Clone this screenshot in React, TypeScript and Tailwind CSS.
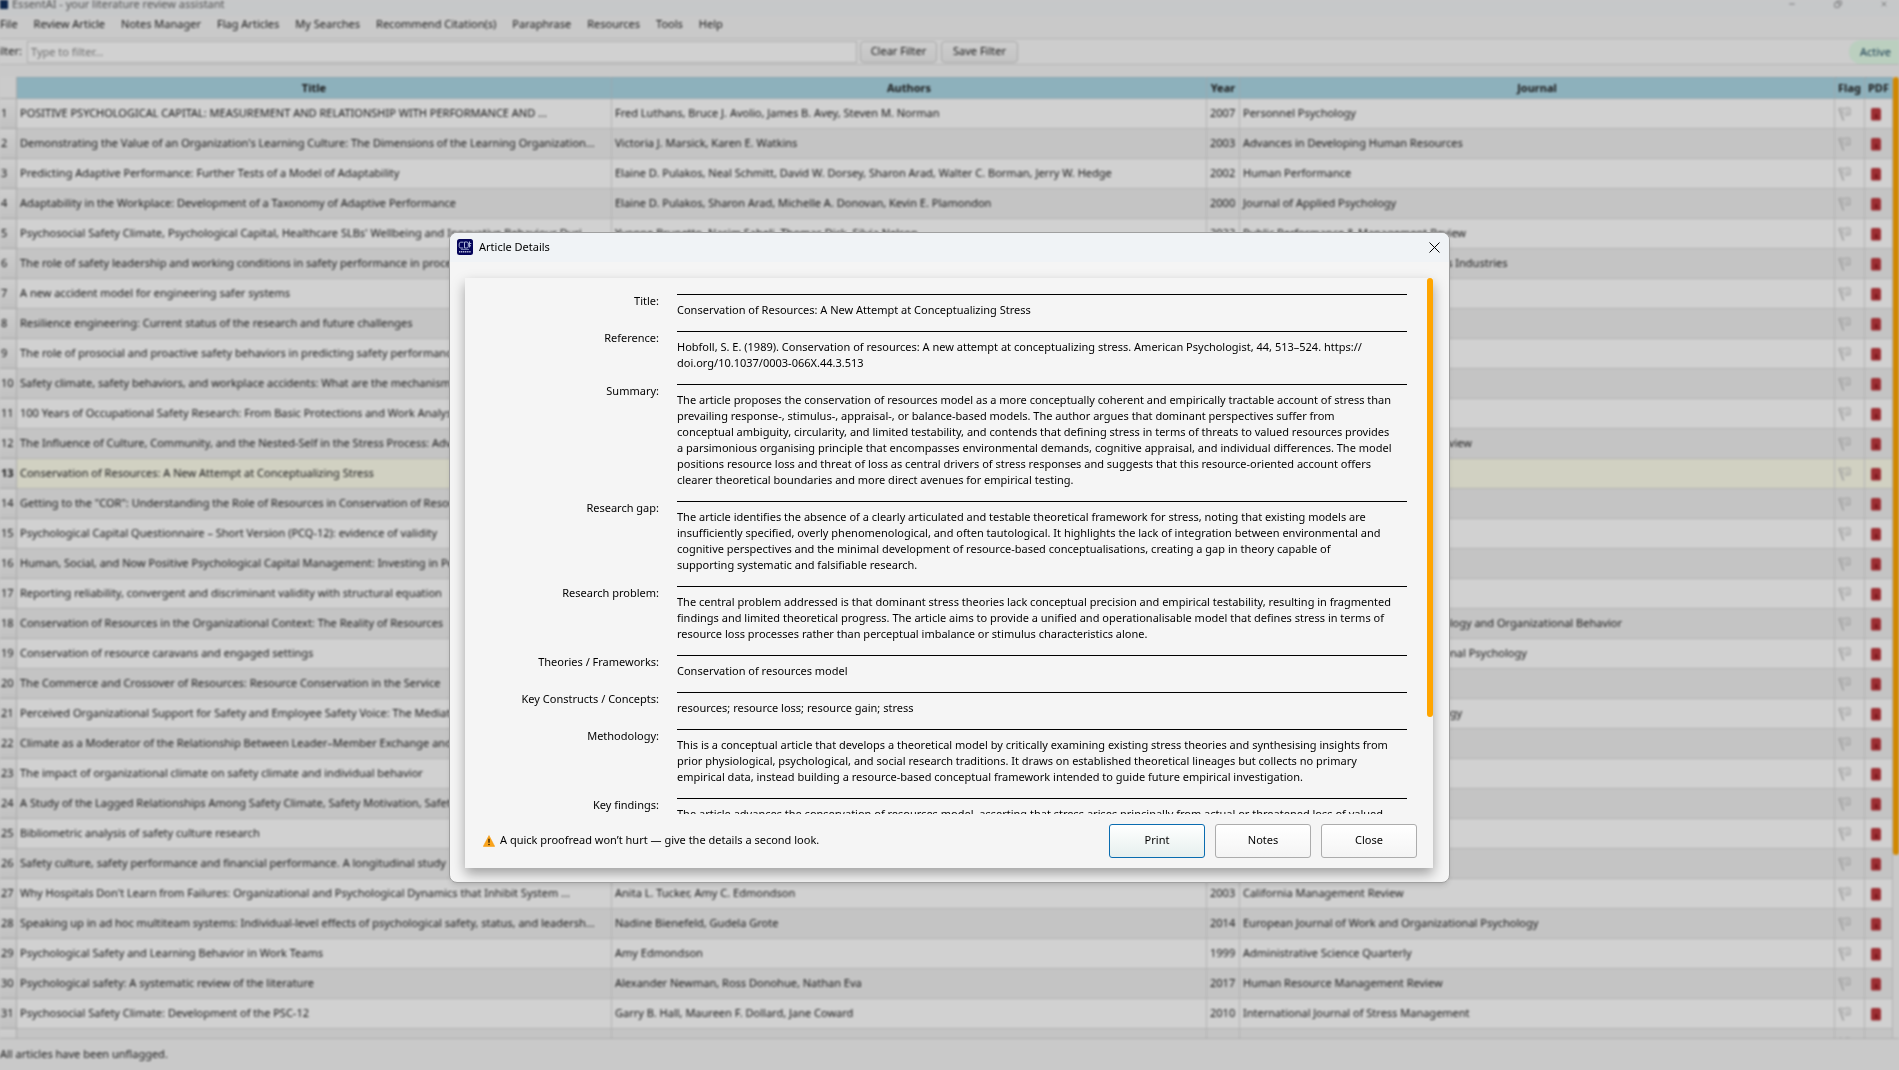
import clsx from "clsx";
import { Copy, Minus, X } from "lucide-react";

interface Article {
  title: string;
  authors: string;
  year: string;
  journal: string;
}

const MENU_ITEMS = [
  "File",
  "Review Article",
  "Notes Manager",
  "Flag Articles",
  "My Searches",
  "Recommend Citation(s)",
  "Paraphrase",
  "Resources",
  "Tools",
  "Help",
];

const SELECTED_ROW = 13;

const toArticle = ([title, authors, year, journal]: string[]): Article => ({
  title,
  authors,
  year,
  journal,
});

const ARTICLES: Article[] = [
  ["POSITIVE PSYCHOLOGICAL CAPITAL: MEASUREMENT AND RELATIONSHIP WITH PERFORMANCE AND ...", "Fred Luthans, Bruce J. Avolio, James B. Avey, Steven M. Norman", "2007", "Personnel Psychology"],
  ["Demonstrating the Value of an Organization's Learning Culture: The Dimensions of the Learning Organization...", "Victoria J. Marsick, Karen E. Watkins", "2003", "Advances in Developing Human Resources"],
  ["Predicting Adaptive Performance: Further Tests of a Model of Adaptability", "Elaine D. Pulakos, Neal Schmitt, David W. Dorsey, Sharon Arad, Walter C. Borman, Jerry W. Hedge", "2002", "Human Performance"],
  ["Adaptability in the Workplace: Development of a Taxonomy of Adaptive Performance", "Elaine D. Pulakos, Sharon Arad, Michelle A. Donovan, Kevin E. Plamondon", "2000", "Journal of Applied Psychology"],
  ["Psychosocial Safety Climate, Psychological Capital, Healthcare SLBs' Wellbeing and Innovative Behaviour Duri...", "Yvonne Brunetto, Nasim Saheli, Thomas Dick, Silvia Nelson", "2022", "Public Performance & Management Review"],
  ["The role of safety leadership and working conditions in safety performance in process industries", "", "2018", "Journal of Loss Prevention in the Process Industries"],
  ["A new accident model for engineering safer systems", "", "", ""],
  ["Resilience engineering: Current status of the research and future challenges", "", "", ""],
  ["The role of prosocial and proactive safety behaviors in predicting safety performance", "", "", ""],
  ["Safety climate, safety behaviors, and workplace accidents: What are the mechanisms?", "", "", ""],
  ["100 Years of Occupational Safety Research: From Basic Protections and Work Analysis", "", "", ""],
  ["The Influence of Culture, Community, and the Nested-Self in the Stress Process: Advancing", "", "2001", "Applied Psychology: An International Review"],
  ["Conservation of Resources: A New Attempt at Conceptualizing Stress", "", "", ""],
  ["Getting to the \"COR\": Understanding the Role of Resources in Conservation of Resources", "", "", ""],
  ["Psychological Capital Questionnaire – Short Version (PCQ-12): evidence of validity", "", "", ""],
  ["Human, Social, and Now Positive Psychological Capital Management: Investing in People", "", "", ""],
  ["Reporting reliability, convergent and discriminant validity with structural equation", "", "", ""],
  ["Conservation of Resources in the Organizational Context: The Reality of Resources", "", "2018", "Annual Review of Organizational Psychology and Organizational Behavior"],
  ["Conservation of resource caravans and engaged settings", "", "2011", "Journal of Occupational and Organizational Psychology"],
  ["The Commerce and Crossover of Resources: Resource Conservation in the Service", "", "", ""],
  ["Perceived Organizational Support for Safety and Employee Safety Voice: The Mediating", "", "2010", "Journal of Occupational Health Psychology"],
  ["Climate as a Moderator of the Relationship Between Leader–Member Exchange and", "", "", ""],
  ["The impact of organizational climate on safety climate and individual behavior", "", "", ""],
  ["A Study of the Lagged Relationships Among Safety Climate, Safety Motivation, Safety", "", "", ""],
  ["Bibliometric analysis of safety culture research", "", "", ""],
  ["Safety culture, safety performance and financial performance. A longitudinal study", "", "", ""],
  ["Why Hospitals Don't Learn from Failures: Organizational and Psychological Dynamics that Inhibit System ...", "Anita L. Tucker, Amy C. Edmondson", "2003", "California Management Review"],
  ["Speaking up in ad hoc multiteam systems: Individual-level effects of psychological safety, status, and leadersh...", "Nadine Bienefeld, Gudela Grote", "2014", "European Journal of Work and Organizational Psychology"],
  ["Psychological Safety and Learning Behavior in Work Teams", "Amy Edmondson", "1999", "Administrative Science Quarterly"],
  ["Psychological safety: A systematic review of the literature", "Alexander Newman, Ross Donohue, Nathan Eva", "2017", "Human Resource Management Review"],
  ["Psychosocial Safety Climate: Development of the PSC-12", "Garry B. Hall, Maureen F. Dollard, Jane Coward", "2010", "International Journal of Stress Management"],
  ["", "", "", ""],
].map(toArticle);

const DETAILS: { label: string; lines: string[] }[] = [
  {
    label: "Title:",
    lines: ["Conservation of Resources: A New Attempt at Conceptualizing Stress"],
  },
  {
    label: "Reference:",
    lines: [
      "Hobfoll, S. E. (1989). Conservation of resources: A new attempt at conceptualizing stress. American Psychologist, 44, 513–524. https://",
      "doi.org/10.1037/0003-066X.44.3.513",
    ],
  },
  {
    label: "Summary:",
    lines: [
      "The article proposes the conservation of resources model as a more conceptually coherent and empirically tractable account of stress than",
      "prevailing response-, stimulus-, appraisal-, or balance-based models. The author argues that dominant perspectives suffer from",
      "conceptual ambiguity, circularity, and limited testability, and contends that defining stress in terms of threats to valued resources provides",
      "a parsimonious organising principle that encompasses environmental demands, cognitive appraisal, and individual differences. The model",
      "positions resource loss and threat of loss as central drivers of stress responses and suggests that this resource-oriented account offers",
      "clearer theoretical boundaries and more direct avenues for empirical testing.",
    ],
  },
  {
    label: "Research gap:",
    lines: [
      "The article identifies the absence of a clearly articulated and testable theoretical framework for stress, noting that existing models are",
      "insufficiently specified, overly phenomenological, and often tautological. It highlights the lack of integration between environmental and",
      "cognitive perspectives and the minimal development of resource-based conceptualisations, creating a gap in theory capable of",
      "supporting systematic and falsifiable research.",
    ],
  },
  {
    label: "Research problem:",
    lines: [
      "The central problem addressed is that dominant stress theories lack conceptual precision and empirical testability, resulting in fragmented",
      "findings and limited theoretical progress. The article aims to provide a unified and operationalisable model that defines stress in terms of",
      "resource loss processes rather than perceptual imbalance or stimulus characteristics alone.",
    ],
  },
  { label: "Theories / Frameworks:", lines: ["Conservation of resources model"] },
  {
    label: "Key Constructs / Concepts:",
    lines: ["resources; resource loss; resource gain; stress"],
  },
  {
    label: "Methodology:",
    lines: [
      "This is a conceptual article that develops a theoretical model by critically examining existing stress theories and synthesising insights from",
      "prior physiological, psychological, and social research traditions. It draws on established theoretical lineages but collects no primary",
      "empirical data, instead building a resource-based conceptual framework intended to guide future empirical investigation.",
    ],
  },
  {
    label: "Key findings:",
    lines: [
      "The article advances the conservation of resources model, asserting that stress arises principally from actual or threatened loss of valued",
    ],
  },
];

function FlagIcon() {
  return (
    <svg width="14" height="16" viewBox="0 0 14 16" fill="none" stroke="#bdbdbd">
      <path d="M1 2.500c2-1.500 3.500 1 5.500.2S10 1.500 12 2.500V9c-2-1-3.500.6-5.500.2" />
      <path d="M1 2.500l4.500 12" strokeWidth="1.500" />
      <path d="M4 4l2 4M9 4v4" />
    </svg>
  );
}

function PdfIcon() {
  return (
    <svg width="12" height="14" viewBox="0 0 12 14">
      <path d="M1 2.500Q1 1 2.500 1H9.500L11 2.500V12Q11 13.500 9.500 13.500H2.500Q1 13.500 1 12z" fill="#c0393f" />
      <path d="M5 11.500c1.500-1.500 2-3 1.500-4.500M5 8.500c1.500.5 2 1.500 3 3" fill="none" stroke="#6e0b12" />
    </svg>
  );
}

function AppIcon() {
  return (
    <svg width="16" height="16" viewBox="0 0 16 16" fill="none">
      <rect width="16" height="16" rx="2.500" fill="#04045a" />
      <path
        d="M6.500 3.200H3.800Q2.200 3.200 2.200 5v2.500q0 1.500 1.600 1.500h2.400M7.500 3h2.300q1.500 0 1.500 1.700v2.800q0 1.500-1.500 1.500H7.500zM12.500 2.500v6M14.300 4.500h-3M14 6.500q-1.500 0-1.500 1.500"
        stroke="#a9b3d6"
      />
      <path d="M4 10.500h8" stroke="#6f78ad" />
      <path d="M2 12.800h12" stroke="#b7bdd9" strokeWidth="1.400" strokeDasharray="1.300 .6" />
    </svg>
  );
}

function WarningIcon() {
  return (
    <svg width="12" height="12" viewBox="0 0 12 12">
      <path d="M6 .6L11.700 11.400H.3z" fill="#fba41a" stroke="#f39a12" strokeWidth=".6" strokeLinejoin="round" />
      <path d="M6 3.800v4" stroke="#2b1a00" strokeWidth="1.300" />
      <circle cx="6" cy="9.500" r=".8" fill="#2b1a00" />
    </svg>
  );
}

function ToolbarButton({ children }: { children: string }) {
  return (
    <button className="h-[22px] w-[77px] rounded-sm border border-[#cfcfcf] bg-linear-to-b from-[#fbfbfb] to-[#efefef]">
      {children}
    </button>
  );
}

function ArticleTable() {
  const th = "h-[22px] border-r border-b border-r-[#c9c9c9] border-b-[#c9c9c9] border-t border-t-[#9fb9c4] border-dotted bg-[#add8e6] p-0 font-bold";
  const td = "overflow-hidden border-r border-b border-[#dadada] p-0 pl-[3px] whitespace-nowrap";

  return (
    <table className="w-full table-fixed border-separate border-spacing-0">
      <colgroup>
        <col className="w-[17px]" />
        <col />
        <col />
        <col className="w-[33px]" />
        <col />
        <col className="w-[30px]" />
        <col className="w-7" />
      </colgroup>
      <thead>
        <tr>
          <th className="border-r border-b border-[#cfcfcf] bg-[#f8f8f8] p-0" />
          {["Title", "Authors", "Year", "Journal", "Flag", "PDF"].map((name) => (
            <th key={name} className={th}>
              {name}
            </th>
          ))}
        </tr>
      </thead>
      <tbody>
        {ARTICLES.map((article, i) => (
          <tr
            key={i}
            className={clsx(
              "h-[30px]",
              i + 1 === SELECTED_ROW ? "bg-[#ffffed]" : i % 2 ? "bg-[#f0f0f0]" : "bg-white"
            )}
          >
            <th
              className={clsx(
                "border-r border-b border-[#cfcfcf] bg-linear-to-b from-[#fbfbfb] to-[#ececec] p-0 pl-px text-left",
                i + 1 === SELECTED_ROW ? "font-bold" : "font-normal"
              )}
            >
              {article.title && i + 1}
            </th>
            <td className={td}>{article.title}</td>
            <td className={td}>{article.authors}</td>
            <td className={td}>{article.year}</td>
            <td className={td}>{article.journal}</td>
            <td className={td}>
              <FlagIcon />
            </td>
            <td className={clsx(td, "pl-[5px]")}>
              <PdfIcon />
            </td>
          </tr>
        ))}
      </tbody>
    </table>
  );
}

function MainWindow() {
  return (
    <div className="flex h-screen flex-col overflow-hidden bg-[#f6f6f6] text-[#222] blur-[1px]">
      {/* Title bar */}
      <div className="flex h-4 shrink-0 items-start justify-between bg-[#f2f4f6] pr-[11px] leading-2 text-[#666]">
        <div className="flex gap-1">
          <div className="h-[9px] w-2 bg-[#12305e]" />
          <span>EssentAI - your literature review assistant</span>
        </div>
        <div className="flex gap-[38px]">
          <Minus size={8} />
          <Copy size={8} className="-scale-x-100" />
          <X size={8} />
        </div>
      </div>

      {/* Menu */}
      <nav className="flex h-[22px] shrink-0 gap-4 leading-4">
        {MENU_ITEMS.map((item) => (
          <button key={item} className="h-4">
            {item}
          </button>
        ))}
      </nav>

      {/* Filter row */}
      <div className="flex h-[27px] shrink-0 items-center border-t border-b border-[#dcdcdc] bg-[#fafafa]">
        <label htmlFor="filter" className="flex w-[22px] shrink-0 justify-end overflow-hidden">
          Filter:
        </label>
        <input
          id="filter"
          placeholder="Type to filter..."
          className="ml-[5px] h-[22px] w-[830px] border border-[#d4d4d4] bg-white px-[3px] placeholder:text-[#8a8a8a]"
        />
        <div className="ml-[3px] flex gap-1">
          <ToolbarButton>Clear Filter</ToolbarButton>
          <ToolbarButton>Save Filter</ToolbarButton>
        </div>
        <span className="ml-auto h-6 w-[50px] rounded-l-xl bg-[#e4fdea] pl-[11px] leading-6 text-[#1f4a63]">
          Active
        </span>
      </div>

      {/* Articles */}
      <div className="mt-3 flex min-h-0 flex-1 overflow-hidden border-b border-[#d4d4d4]">
        <div className="flex-1">
          <ArticleTable />
        </div>
        <div className="w-1.5">
          <div className="h-[81%] rounded-full bg-[#ffa500]" />
        </div>
      </div>

      <div className="h-[31px] shrink-0 leading-[30px]">All articles have been unflagged.</div>
    </div>
  );
}

function DialogButton({ primary, children }: { primary?: boolean; children: string }) {
  return (
    <button
      className={clsx(
        "h-[34px] w-24 rounded-[3px] border bg-linear-to-b from-white",
        primary ? "border-[#0a6cb0] to-[#e6efee]" : "border-[#acacac] to-[#f4f4f4]"
      )}
    >
      {children}
    </button>
  );
}

function DetailsDialog() {
  return (
    <div
      role="dialog"
      aria-labelledby="dialog-title"
      className="w-full max-w-[1001px] overflow-hidden rounded-lg border border-[#a0a0a0] bg-[#f5f5f5] shadow-md"
    >
      <div className="flex h-[29px] items-center gap-1.5 bg-[#f0f3f6] pr-[9px] pl-[7px]">
        <AppIcon />
        <h1 id="dialog-title">Article Details</h1>
        <button aria-label="Close dialog" className="ml-auto">
          <svg width="11" height="11" viewBox="0 0 11 11" stroke="#000">
            <path d="M.5.5l10 10M10.500.5l-10 10" />
          </svg>
        </button>
      </div>

      <div className="pt-4 pr-4 pb-[14px] pl-[15px]">
        <div className="bg-[#f5f5f5] shadow-[0_6px_12px_rgba(0,0,0,0.35)]">
          <div className="flex h-[536px] overflow-hidden">
            <dl className="grid flex-1 auto-rows-max grid-cols-[194px_1fr] gap-x-[18px] pt-4 pr-5 leading-4">
              {DETAILS.map(({ label, lines }) => (
                <div key={label} className="col-span-2 grid grid-cols-subgrid">
                  <dt className="text-right leading-[14px]">{label}</dt>
                  <dd className="border-t border-black pt-[7px] pb-[13px] whitespace-pre">
                    {lines.join("\n")}
                  </dd>
                </div>
              ))}
            </dl>
            <div className="w-1.5">
              <div className="h-[82%] rounded-full bg-[#ffa500]" />
            </div>
          </div>

          <div className="flex h-[54px] items-center gap-[10px] pr-4 pl-[18px]">
            <p className="mr-auto flex items-center gap-[5px]">
              <WarningIcon />
              A quick proofread won’t hurt — give the details a second look.
            </p>
            <DialogButton primary>Print</DialogButton>
            <DialogButton>Notes</DialogButton>
            <DialogButton>Close</DialogButton>
          </div>
        </div>
      </div>
    </div>
  );
}

export default function App() {
  return (
    <div className="overflow-hidden bg-[#f6f6f6] font-['Noto_Sans',sans-serif] text-[11px] text-black">
      <MainWindow />
      <div className="fixed inset-0 flex items-center justify-center bg-black/18 pt-11">
        <DetailsDialog />
      </div>
    </div>
  );
}
